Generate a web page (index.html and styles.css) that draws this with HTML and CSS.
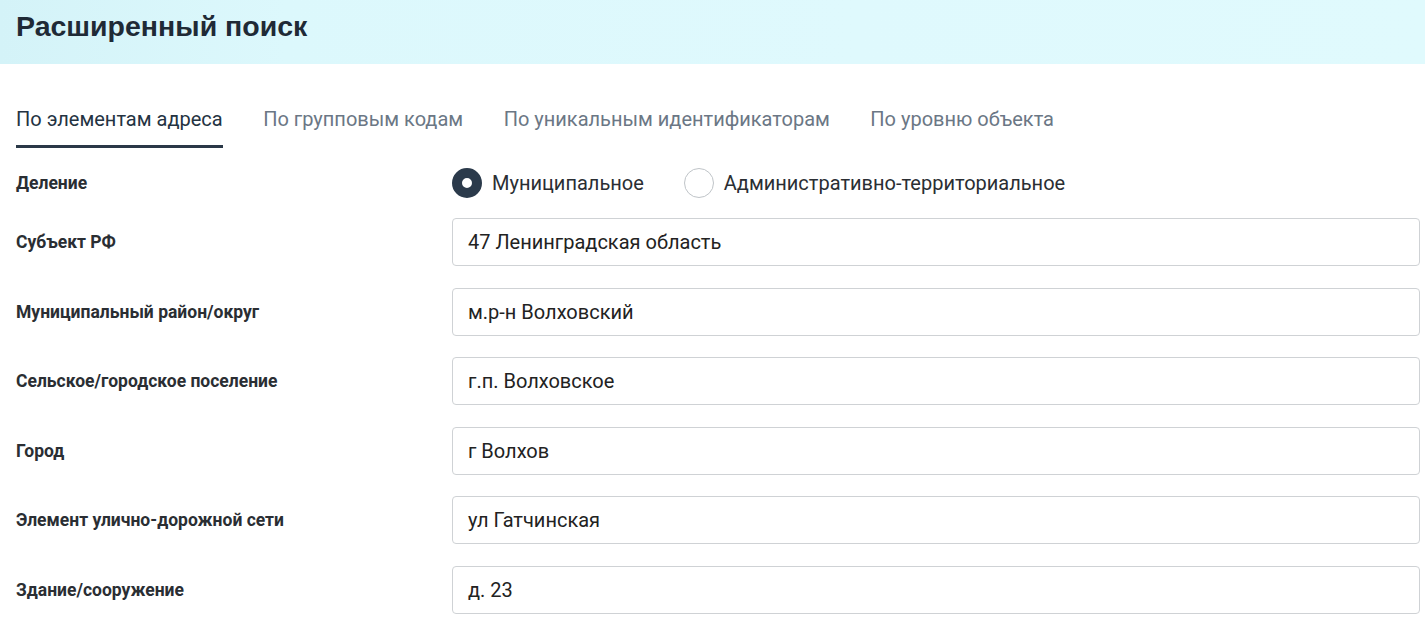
FILE: index.html
```html
<!DOCTYPE html>
<html lang="ru">
<head>
    <meta charset="UTF-8">
    <meta name="viewport" content="width=device-width, initial-scale=1.0">
    <title>Расширенный поиск</title>
    <link rel="stylesheet" href="styles.css">
</head>
<body>
    <header class="page-head">
        <h1>Расширенный поиск</h1>
    </header>

    <nav class="tabs">
        <a class="tab active" href="#">По элементам адреса</a>
        <a class="tab" href="#">По групповым кодам</a>
        <a class="tab" href="#">По уникальным идентификаторам</a>
        <a class="tab" href="#">По уровню объекта</a>
    </nav>

    <form class="search-form">
        <div class="row radio-row">
            <div class="label">Деление</div>
            <div class="radios">
                <label class="radio checked"><span class="dot"></span>Муниципальное</label>
                <label class="radio"><span class="dot"></span>Административно-территориальное</label>
            </div>
        </div>
        <div class="row">
            <div class="label">Субъект РФ</div>
            <div class="field">47 Ленинградская область</div>
        </div>
        <div class="row">
            <div class="label">Муниципальный район/округ</div>
            <div class="field">м.р-н Волховский</div>
        </div>
        <div class="row">
            <div class="label">Сельское/городское поселение</div>
            <div class="field">г.п. Волховское</div>
        </div>
        <div class="row">
            <div class="label">Город</div>
            <div class="field">г Волхов</div>
        </div>
        <div class="row">
            <div class="label">Элемент улично-дорожной сети</div>
            <div class="field">ул Гатчинская</div>
        </div>
        <div class="row">
            <div class="label">Здание/сооружение</div>
            <div class="field">д. 23</div>
        </div>
    </form>
</body>
</html>
```

FILE: styles.css
```css
body {
    margin: 0;
    font-family: Roboto, "Liberation Sans", sans-serif;
    color: #222;
    background: #fff;
}

.page-head {
    height: 64px;
    box-sizing: border-box;
    padding: 10px 16px 0;
    background: linear-gradient(90deg, #d4f3f8 0%, #dcf8fc 20%, #dff9fd 60%, #e0fafd 100%);
}

.page-head h1 {
    margin: 0;
    font-family: "Liberation Sans", Arial, sans-serif;
    font-size: 28.5px;
    line-height: 32px;
    font-weight: bold;
    color: #1f2a36;
}

.tabs {
    display: flex;
    gap: 40.5px;
    padding: 43px 16px 0;
}

.tab {
    font-size: 20px;
    line-height: 24px;
    padding-bottom: 14px;
    border-bottom: 3px solid transparent;
    color: #6b7785;
    text-decoration: none;
}

.tab.active {
    color: #243342;
    border-bottom-color: #2a3847;
}

.search-form {
    padding: 20px 5px 0 16px;
    display: flex;
    flex-direction: column;
    gap: 20px;
}

.row {
    display: flex;
    align-items: center;
}

.row + .row + .row {
    margin-top: 1.6px;
}

.label {
    width: 436px;
    flex: none;
    font-size: 17.5px;
    font-weight: bold;
    color: #2a2e33;
}

.radio-row {
    height: 30px;
}

.radios {
    display: flex;
    gap: 40px;
}

.radio {
    display: flex;
    align-items: center;
    gap: 10px;
    font-size: 20px;
    color: #2a2e33;
}

.dot {
    width: 30px;
    height: 30px;
    border-radius: 50%;
    border: 1px solid #bfc4c8;
    box-sizing: border-box;
    background: #fff;
}

.radio.checked .dot {
    border: 10px solid #2b3a4b;
}

.field {
    flex: 1;
    height: 48px;
    box-sizing: border-box;
    border: 1px solid #cfd2d5;
    border-radius: 4px;
    padding: 0 15px;
    display: flex;
    align-items: center;
    font-size: 20px;
    color: #222;
}
```
